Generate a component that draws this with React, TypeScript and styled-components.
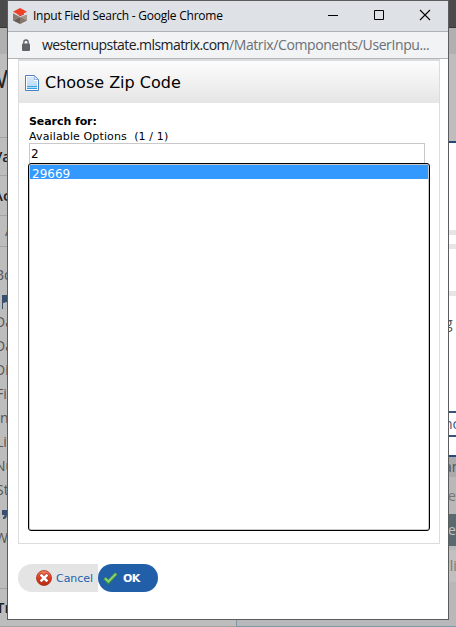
import React from "react";
import styled, { createGlobalStyle, css } from "styled-components";

const GlobalStyle = createGlobalStyle`
  * { box-sizing: border-box; }
  html, body { margin: 0; padding: 0; overflow: hidden; }
  body { font-family: "DejaVu Sans", Verdana, sans-serif; color: #000; }
`;

const Desktop = styled.div`
  position: relative;
  display: flex;
  flex-direction: column;
  width: 456px;
  height: 627px;
  overflow: hidden;
  background: #bdbdbd;
  font-family: "Open Sans", "Segoe UI", sans-serif;
`;

const PageHeader = styled.div`
  flex: none;
  height: 28px;
  background: #4b4b4b;
  border-bottom: 1px solid #363636;
`;

const PageToolbar = styled.div`
  flex: none;
  height: 26px;
  background: #b0b0b0;
`;

const PageColumns = styled.div`
  flex: 1;
  min-height: 0;
  display: flex;
  justify-content: space-between;
`;

const Criteria = styled.div`
  width: 236px;
  overflow: hidden;
`;

const CriteriaRow = styled.div<{ $h: number; $line?: boolean; $bold?: boolean; $size?: number; $shift?: number; $lift?: number }>`
  display: flex;
  align-items: center;
  height: ${(p) => p.$h}px;
  padding-bottom: ${(p) => p.$lift ?? 0}px;
  text-indent: ${(p) => p.$shift ?? -5}px;
  border-bottom: ${(p) => (p.$line ? "1px solid #a3a3a3" : "none")};
  color: ${(p) => (p.$bold ? "#222" : "#555")};
  font-size: ${(p) => p.$size ?? 14}px;
  font-weight: ${(p) => (p.$bold ? 600 : 400)};
  line-height: 1;
  white-space: nowrap;
`;

const CriteriaTitle = styled(CriteriaRow)`
  color: #222;
`;

const Backdrop = styled.div`
  display: flex;
  flex-direction: column;
  width: 220px;
  background: #b8b8ba;
  border-left: 1px solid #7c99aa;
  border-bottom: 1px solid #7c99aa;
  font-size: 14px;
  line-height: 1;
`;

const Slab = styled.div<{ $h: number; $bg: string; $fg?: string; $shift?: number }>`
  display: flex;
  flex: none;
  align-items: center;
  height: ${(p) => p.$h}px;
  padding-left: ${(p) => 212 + (p.$shift ?? 0)}px;
  margin-left: -1px;
  overflow: hidden;
  background: ${(p) => p.$bg};
  color: ${(p) => p.$fg ?? "#555"};
  white-space: nowrap;
`;

const OutlinedSlab = styled(Slab)`
  border-top: 2px solid #36557a;
  border-bottom: 2px solid #36557a;
`;

const Window = styled.div`
  position: absolute;
  left: 7px;
  top: 0;
  display: flex;
  flex-direction: column;
  width: 442px;
  height: 620px;
  border: 1px solid #5c5c5c;
  background: #fff;
`;

const TitleBar = styled.div`
  display: flex;
  flex: none;
  align-items: center;
  height: 31px;
  padding: 0 17px 0 4px;
  background: #dee1e6;
  border-bottom: 1px solid #aeb1b5;
`;

const WindowTitle = styled.span`
  flex: 1;
  margin-left: 5px;
  font-size: 12px;
  line-height: 16px;
  letter-spacing: -0.24px;
  white-space: nowrap;
`;

const WindowControls = styled.div`
  display: flex;
  gap: 34px;
  padding-bottom: 2px;
`;

const AddressBar = styled.div`
  display: flex;
  flex: none;
  align-items: center;
  height: 27px;
  padding: 0 0 0 13px;
  background: #f1f3f4;
  border-bottom: 1px solid #b3b5b7;
  font-size: 14px;
  line-height: 20px;
`;

const Url = styled.span`
  margin-left: 11px;
  white-space: nowrap;
  color: #202124;
  letter-spacing: -0.57px;
`;

const UrlPath = styled.span`
  color: #6b6f74;
  letter-spacing: -0.4px;
`;

const Content = styled.div`
  display: flex;
  flex: 1;
  flex-direction: column;
  align-items: flex-start;
  padding: 0 8px 0 10px;
  font-family: "DejaVu Sans", Verdana, sans-serif;
`;

const Panel = styled.section`
  width: 422px;
  height: 485px;
  border: 1px solid #dcdcdc;
  border-top-width: 2px;
`;

const PanelHeader = styled.header`
  display: flex;
  align-items: center;
  height: 42px;
  padding: 1px 0 0 5px;
  background: linear-gradient(#fdfdfd, #e5e5e5);
`;

const PanelTitle = styled.h1`
  margin: 1px 0 0 5px;
  font-size: 16px;
  font-weight: 400;
  line-height: 20px;
`;

const Form = styled.div`
  display: flex;
  flex-direction: column;
  padding: 11px 9px 0 10px;
  font-size: 11px;
  line-height: 15px;
`;

const SearchLabel = styled.label`
  font-weight: 700;
  letter-spacing: -0.07px;
`;

const OptionCount = styled.div`
  white-space: pre;
  letter-spacing: 0.13px;
`;

const SearchInput = styled.div`
  width: 396px;
  height: 20px;
  margin-top: -1px;
  padding: 3px 1px 0;
  border: 1px solid #c9c9c9;
  border-bottom: 0;
  font-size: 12px;
`;

const OptionList = styled.div`
  width: 402px;
  height: 368px;
  margin-left: -1px;
  padding: 1px;
  border: 1px solid #000;
  border-radius: 3px;
  box-shadow: inset 0 0 0 1px #c8c8c8;
`;

const Option = styled.div`
  height: 14px;
  padding-left: 2px;
  background: #3399ff;
  color: #fff;
  font-size: 12px;
  line-height: 18px;
`;

const Actions = styled.div`
  display: flex;
  height: 28px;
  margin-top: 20px;
`;

const actionBase = css`
  display: flex;
  align-items: center;
  height: 28px;
  padding: 0;
  border: 0;
  font-family: inherit;
  font-size: 11px;
  letter-spacing: -0.05px;
`;

const CancelButton = styled.button`
  ${actionBase}
  width: 80px;
  padding-left: 18px;
  gap: 4px;
  border-radius: 14px 0 0 14px;
  background: #e4e4e4;
  color: #1d5fae;
`;

const OkButton = styled.button`
  ${actionBase}
  width: 60px;
  padding-left: 5px;
  gap: 5px;
  border-radius: 14px;
  background: #225fa9;
  color: #fff;
  font-weight: 700;
  letter-spacing: -0.6px;
`;

const Icon = styled.svg`
  display: block;
  flex: none;
`;

const BrandIcon = () => (
  <Icon width="16" height="18" viewBox="0 0 16 18">
    <path d="M1 4.7 8 1l7 3.7L8 8.2z" fill="#ef3f25" />
    <path d="M4 6.2 8 8.2l4-2v1.2L8 9.2z" fill="#c8321f" />
    <path d="M1 6.2l7 3.8-7 3.4z" fill="#8b7b71" />
    <path d="M1 13.4 8 10v7z" fill="#695c55" />
    <path d="m8 10 7-2.6v6L8 17z" fill="#a6988b" />
    <path d="m8 10 7 3.4L8 17z" fill="#85776d" />
  </Icon>
);

const LockIcon = () => (
  <Icon width="10" height="13" viewBox="0 0 10 13">
    <rect x="1" y="4.5" width="8" height="7.5" rx="1" fill="#5f6368" />
    <path d="M2.8 5V3.2a2.2 2.2 0 0 1 4.4 0V5" fill="none" stroke="#5f6368" strokeWidth="1.3" />
  </Icon>
);

const DocumentIcon = () => (
  <Icon width="16" height="16" viewBox="0 0 16 16">
    <defs>
      <linearGradient id="sheet" x1="0" y1="0" x2="0" y2="1">
        <stop offset="0" stopColor="#d6e9fb" />
        <stop offset="1" stopColor="#b7daf8" />
      </linearGradient>
    </defs>
    <path d="M1.5.5h8.8l4.2 4v11h-13z" fill="#fff" stroke="#4f80bf" />
    <path d="M3 2h7v4h3v8H3z" fill="url(#sheet)" />
    <path d="M10.3.8v3.7h3.9z" fill="#eaf4fd" stroke="#6e9acf" strokeWidth=".7" />
    <path d="M3 11.5h10M3 13.5h10" stroke="#32a4ee" />
  </Icon>
);

const CancelIcon = () => (
  <Icon width="16" height="16" viewBox="0 0 16 16">
    <defs>
      <linearGradient id="stop" x1="0" y1="0" x2="0" y2="1">
        <stop offset="0" stopColor="#f38b6b" />
        <stop offset=".5" stopColor="#dc3c1e" />
        <stop offset="1" stopColor="#b92b12" />
      </linearGradient>
    </defs>
    <circle cx="8" cy="8" r="7.5" fill="url(#stop)" stroke="#a82f1b" strokeWidth=".8" />
    <path d="m5.5 5.5 5 5m0-5-5 5" stroke="#b62e19" strokeWidth="4" strokeLinecap="square" />
    <path d="m5.5 5.5 5 5m0-5-5 5" stroke="#fff" strokeWidth="2.6" strokeLinecap="square" />
  </Icon>
);

const CheckIcon = () => (
  <Icon width="15" height="14" viewBox="0 0 15 14">
    <path d="m1.4 7 4 4.2L13.4 2.4" fill="none" stroke="#35903b" strokeWidth="3.6" />
    <path d="m1.9 7.3 3.5 3.3L13 2.7" fill="none" stroke="#8bd076" strokeWidth="2.1" />
  </Icon>
);

const FlagIcon = () => (
  <Icon width="12" height="15" viewBox="0 0 12 15">
    <path d="M2 0h1v14H2zM3 0h9v8H9L7 7 3 8z" fill="#37506d" />
  </Icon>
);

const QuoteIcon = () => (
  <Icon width="8" height="11" viewBox="0 0 8 11">
    <path d="M2 1h5v4c0 3-1 5-4 5V8c1 0 1.5-1 1.5-2H2z" fill="#37506d" />
  </Icon>
);

const fields = [
  { name: "Date", shift: -5 },
  { name: "Date", shift: -5 },
  { name: "Distance", shift: -5 },
  { name: "Fields", shift: -4 },
  { name: "Index", shift: -4 },
  { name: "List", shift: -4 },
  { name: "Number", shift: -5 },
  { name: "Status", shift: -4 },
];

export default function App() {
  return (
    <>
      <GlobalStyle />
      <Desktop>
        <PageHeader />
        <PageToolbar />
        <PageColumns>
          <Criteria>
            <CriteriaTitle $h={84} $line $size={25} $shift={-15} $lift={35}>W</CriteriaTitle>
            <CriteriaRow $h={38} $line $bold $size={15} $shift={-7}>Va</CriteriaRow>
            <CriteriaRow $h={40} $line $bold $size={15} $shift={-7}>Ac</CriteriaRow>
            <CriteriaRow $h={31} $line $shift={5}>A</CriteriaRow>
            <CriteriaRow $h={55}>Bo</CriteriaRow>
            <CriteriaRow $h={8} $lift={8}><FlagIcon /></CriteriaRow>
            {fields.map((field, i) => (
              <CriteriaRow key={i} $h={24} $shift={field.shift}>{field.name}</CriteriaRow>
            ))}
            <CriteriaRow $h={24}><QuoteIcon /></CriteriaRow>
            <CriteriaRow $h={24}>W</CriteriaRow>
            <CriteriaRow $h={39} $line />
            <CriteriaRow $h={38} $line $bold $size={15} $shift={-4}>Tr</CriteriaRow>
          </Criteria>
          <Backdrop>
            <Slab $h={87} $bg="#bdbdbd" />
            <Slab $h={2} $bg="#214b7c" />
            <Slab $h={87} $bg="#fff" />
            <Slab $h={5} $bg="#e6e6e6" />
            <Slab $h={9} $bg="#fff" />
            <Slab $h={5} $bg="#e6e6e6" />
            <Slab $h={42} $bg="#fff" />
            <Slab $h={5} $bg="#e6e6e6" />
            <Slab $h={53} $bg="#fff" $shift={-3}>g</Slab>
            <Slab $h={62} $bg="#fff" />
            <OutlinedSlab $h={26} $bg="#fff" $fg="#36557a" $shift={-4}>nc</OutlinedSlab>
            <Slab $h={18} $bg="#fff" />
            <Slab $h={2} $bg="#214b7c" />
            <Slab $h={20} $bg="#aaaaaa" $shift={-4}>an</Slab>
            <Slab $h={37} $bg="#b8b8b8" $fg="#777">et</Slab>
            <Slab $h={32} $bg="#596970" $fg="#c0c0c0">et</Slab>
            <Slab $h={4} $bg="#b8b8b8" />
            <Slab $h={32} $bg="#c0c0c0" $fg="#777" $shift={-7}>Cli</Slab>
          </Backdrop>
        </PageColumns>

        <Window>
          <TitleBar>
            <BrandIcon />
            <WindowTitle>Input Field Search - Google Chrome</WindowTitle>
            <WindowControls>
              <Icon width="12" height="12" viewBox="0 0 12 12"><path d="M1 6.5h10" stroke="#000" /></Icon>
              <Icon width="12" height="12" viewBox="0 0 12 12"><path d="M1.5 1.5h9v9h-9z" fill="none" stroke="#000" /></Icon>
              <Icon width="12" height="12" viewBox="0 0 12 12"><path d="m1 1 10 10M11 1 1 11" stroke="#000" strokeWidth="1.1" /></Icon>
            </WindowControls>
          </TitleBar>
          <AddressBar>
            <LockIcon />
            <Url>westernupstate.mlsmatrix.com<UrlPath>/Matrix/Components/UserInpu...</UrlPath></Url>
          </AddressBar>
          <Content>
            <Panel>
              <PanelHeader>
                <DocumentIcon />
                <PanelTitle>Choose Zip Code</PanelTitle>
              </PanelHeader>
              <Form>
                <SearchLabel>Search for:</SearchLabel>
                <OptionCount>{"Available Options  (1 / 1)"}</OptionCount>
                <SearchInput>2</SearchInput>
                <OptionList>
                  <Option>29669</Option>
                </OptionList>
              </Form>
            </Panel>
            <Actions>
              <CancelButton><CancelIcon />Cancel</CancelButton>
              <OkButton><CheckIcon />OK</OkButton>
            </Actions>
          </Content>
        </Window>
      </Desktop>
    </>
  );
}
